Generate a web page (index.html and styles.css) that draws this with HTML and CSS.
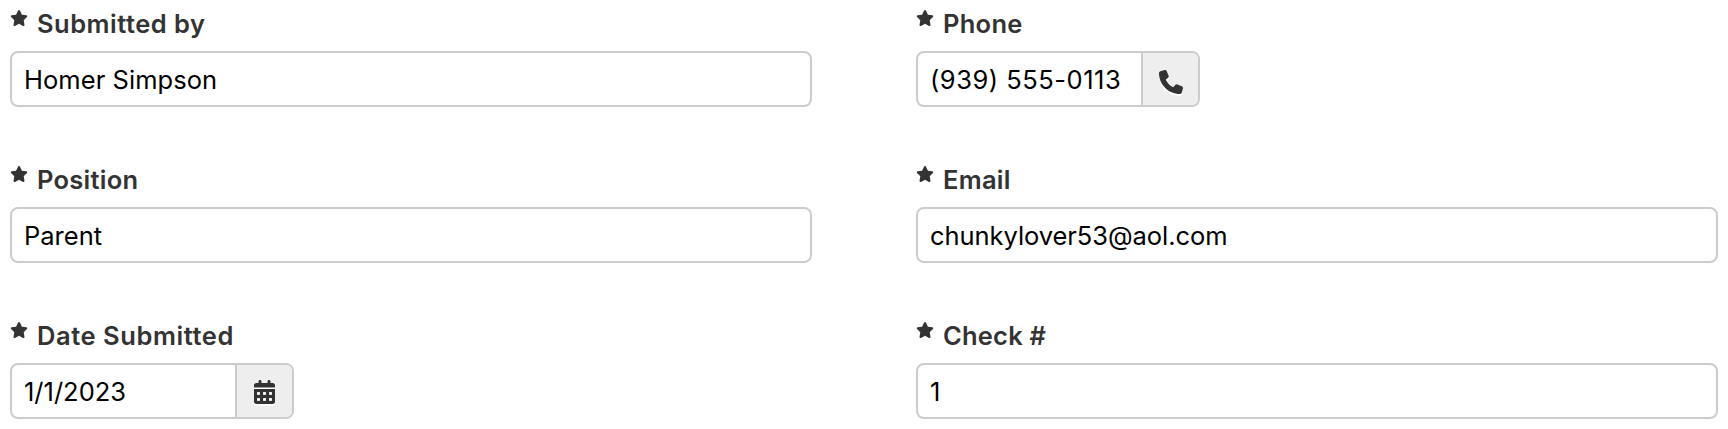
FILE: index.html
```html
<!DOCTYPE html>
<html lang="en">
<head>
<meta charset="utf-8">
<title>Submission details</title>
<link rel="stylesheet" href="styles.css">
</head>
<body>
<svg class="defs" aria-hidden="true">
  <symbol id="star" viewBox="0 0 576 512"><path d="M316.900 18C311.600 7 300.400 0 288.100 0s-23.400 7-28.800 18L195 150.300 51.400 171.500c-12 1.800-22 10.200-25.700 21.700s-.7 24.200 7.900 32.700L137.800 329 113.200 474.700c-2 12 3 24.200 12.900 31.300s23 8 33.800 2.300l128.300-68.500 128.300 68.500c10.800 5.700 23.900 4.900 33.800-2.300s14.900-19.300 12.900-31.300L438.500 329 542.700 225.900c8.600-8.500 11.700-21.200 7.900-32.700s-13.700-19.900-25.700-21.700L381.200 150.300 316.900 18z"/></symbol>
</svg>
<main class="form">
  <div class="field">
    <div class="label"><svg class="star"><use href="#star"/></svg><span class="t-submitted">Submitted by</span></div>
    <div class="control"><div class="value v-name">Homer Simpson</div></div>
  </div>
  <div class="field">
    <div class="label"><svg class="star"><use href="#star"/></svg><span class="t-phone">Phone</span></div>
    <div class="control short"><div class="value v-phone">(939) 555-0113</div>
      <div class="addon"><svg class="icon phone" viewBox="0 0 512 512"><path d="M164.900 24.600c-7.700-18.600-28-28.500-47.400-23.200l-88 24C12.100 30.200 0 46 0 64C0 311.400 200.600 512 448 512c18 0 33.800-12.100 38.600-29.500l24-88c5.300-19.400-4.600-39.700-23.200-47.400l-96-40c-16.300-6.800-35.200-2.100-46.300 11.600L304.700 368C234.300 334.700 177.300 277.700 144 207.300L193.300 167c13.700-11.200 18.400-30 11.600-46.300l-40-96z"/></svg></div>
    </div>
  </div>
  <div class="field">
    <div class="label"><svg class="star"><use href="#star"/></svg><span class="t-position">Position</span></div>
    <div class="control"><div class="value v-parent">Parent</div></div>
  </div>
  <div class="field">
    <div class="label"><svg class="star"><use href="#star"/></svg><span class="t-email">Email</span></div>
    <div class="control"><div class="value v-email">chunkylover53@aol.com</div></div>
  </div>
  <div class="field">
    <div class="label"><svg class="star"><use href="#star"/></svg><span class="t-date">Date Submitted</span></div>
    <div class="control short"><div class="value v-date">1/1/2023</div>
      <div class="addon"><svg class="icon calendar" viewBox="0 0 448 512"><path d="M128 0c17.700 0 32 14.300 32 32V64H288V32c0-17.700 14.300-32 32-32s32 14.300 32 32V64h48c26.500 0 48 21.500 48 48v48H0V112C0 85.500 21.500 64 48 64H96V32c0-17.700 14.300-32 32-32zM0 192H448V464c0 26.500-21.500 48-48 48H48c-26.500 0-48-21.500-48-48V192zm64 80v32c0 8.800 7.200 16 16 16h32c8.800 0 16-7.200 16-16V272c0-8.800-7.200-16-16-16H80c-8.800 0-16 7.200-16 16zm128 0v32c0 8.800 7.200 16 16 16h32c8.800 0 16-7.200 16-16V272c0-8.800-7.200-16-16-16H208c-8.800 0-16 7.200-16 16zm144-16c-8.800 0-16 7.200-16 16v32c0 8.800 7.200 16 16 16h32c8.800 0 16-7.200 16-16V272c0-8.800-7.200-16-16-16H336zM64 400v32c0 8.800 7.200 16 16 16h32c8.800 0 16-7.200 16-16V400c0-8.800-7.200-16-16-16H80c-8.800 0-16 7.200-16 16zm144-16c-8.800 0-16 7.200-16 16v32c0 8.800 7.200 16 16 16h32c8.800 0 16-7.200 16-16V400c0-8.800-7.200-16-16-16H208zm112 16v32c0 8.800 7.200 16 16 16h32c8.800 0 16-7.200 16-16V400c0-8.800-7.200-16-16-16H336c-8.800 0-16 7.200-16 16z"/></svg></div>
    </div>
  </div>
  <div class="field">
    <div class="label"><svg class="star"><use href="#star"/></svg><span class="t-check">Check #</span></div>
    <div class="control"><div class="value v-check">1</div></div>
  </div>
</main>
</body>
</html>
```

FILE: styles.css
```css
* { box-sizing: border-box; }
body {
  margin: 0;
  background: #fff;
  font-family: Inter, "Liberation Sans", sans-serif;
  font-size: 25.5px;
  color: #333;
}
.defs { display: none; }
.form {
  display: grid;
  grid-template-columns: 802px 802px;
  column-gap: 104px;
  grid-auto-rows: 156px;
  padding-left: 10px;
  height: 429px;
  overflow: hidden;
}
.label {
  display: flex;
  align-items: flex-start;
  height: 51px;
  padding-top: 8px;
  font-weight: 600;
  line-height: 32px;
  white-space: nowrap;
}
.star {
  width: 18px;
  height: 16px;
  margin: 2px 9px 0 0;
  fill: #333;
}
.t-submitted { letter-spacing: 0.5px; }
.t-date { letter-spacing: 0.56px; }
.t-phone, .t-position, .t-email { letter-spacing: 0.27px; }
.t-check { letter-spacing: 0.2px; }
.control {
  display: flex;
  height: 56px;
  border: 2px solid #ccc;
  border-radius: 8px;
  overflow: hidden;
}
.short { width: 284px; }
.value {
  flex: 1;
  padding-left: 12px;
  line-height: 53px;
  color: #000;
  white-space: nowrap;
}
.v-name { letter-spacing: 0.05px; }
.v-phone { letter-spacing: 0.52px; }
.v-email { letter-spacing: -0.06px; }
.addon {
  display: flex;
  align-items: center;
  justify-content: center;
  width: 57px;
  border-left: 2px solid #ccc;
  background: #eee;
}
.icon { height: 24px; fill: #333; filter: drop-shadow(0 2px 0 #fff); }
.phone { width: 24px; margin-top: 6px; }
.calendar { width: 21px; margin-top: 2px; }
```
